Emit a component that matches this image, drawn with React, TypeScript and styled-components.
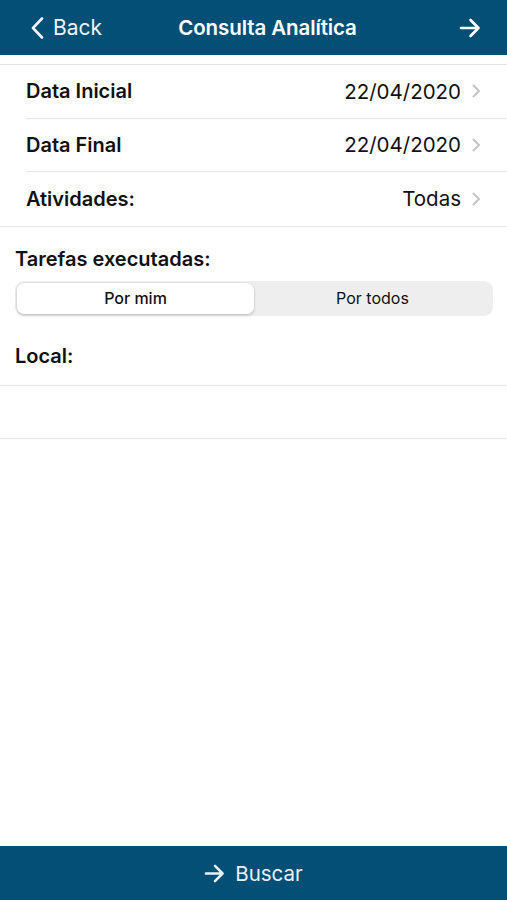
import React, { useState } from "react";
import styled, { createGlobalStyle } from "styled-components";

const Global = createGlobalStyle`
  html, body { margin: 0; padding: 0; background: #ffffff; }
  body { font-family: Inter, "Noto Sans", "Liberation Sans", sans-serif; -webkit-font-smoothing: antialiased; }
  * { box-sizing: border-box; }
`;

const BLUE = "#034f76";

const Screen = styled.div`
  width: 507px;
  height: 900px;
  display: flex;
  flex-direction: column;
  background: #ffffff;
  overflow: hidden;
`;

const NavBar = styled.header`
  height: 55px;
  flex: 0 0 55px;
  background: ${BLUE};
  display: flex;
  align-items: center;
  color: #ffffff;
`;

const NavLeft = styled.button`
  width: 120px;
  height: 100%;
  display: flex;
  align-items: center;
  gap: 9px;
  padding: 0 0 0 31px;
  border: 0;
  background: transparent;
  color: #eef4f8;
  font: 400 21px Inter, "Liberation Sans", sans-serif;
  cursor: pointer;
`;

const NavTitle = styled.h1`
  flex: 1;
  margin: 0;
  text-align: center;
  font: 600 20.5px Inter, "Liberation Sans", sans-serif;
  letter-spacing: -0.1px;
  color: #ffffff;
`;

const NavRight = styled.button`
  width: 92px;
  height: 100%;
  display: flex;
  align-items: center;
  justify-content: flex-end;
  padding: 0 26px 0 0;
  border: 0;
  background: transparent;
  color: #ffffff;
  cursor: pointer;
`;

const Content = styled.main`
  flex: 1;
  display: flex;
  flex-direction: column;
  padding-top: 9px;
`;

const Group = styled.section`
  border-top: 1px solid #e6e6e8;
  border-bottom: 1px solid #e6e6e8;
  padding-left: 26px;
`;

const Row = styled.div<{ $last?: boolean }>`
  height: 53.5px;
  display: flex;
  align-items: center;
  padding-right: 26px;
  border-bottom: ${(p) => (p.$last ? "0" : "1px solid #e6e6e8")};
`;

const RowLabel = styled.span`
  flex: 1;
  font: 600 20px Inter, "Liberation Sans", sans-serif;
  color: #111111;
`;

const RowValue = styled.span`
  font: 400 20.5px Inter, "Liberation Sans", sans-serif;
  color: #111111;
  margin-right: 11px;
`;

const SectionTitle = styled.h2`
  margin: 0;
  padding: 0 15px;
  font: 600 20px Inter, "Liberation Sans", sans-serif;
  color: #111111;
`;

const TasksBlock = styled.div`
  display: flex;
  flex-direction: column;
  gap: 10px;
  padding-top: 20px;
`;

const Segmented = styled.div`
  margin: 0 14px 0 15px;
  height: 35px;
  border-radius: 9px;
  background: #eeeeef;
  padding: 2px;
  display: grid;
  grid-template-columns: 1fr 1fr;
`;

const Segment = styled.button<{ $active?: boolean }>`
  border: 0;
  border-radius: 7px;
  background: ${(p) => (p.$active ? "#ffffff" : "transparent")};
  box-shadow: ${(p) =>
    p.$active ? "0 0 0 0.5px rgba(0,0,0,0.08), 0 2px 3px rgba(0,0,0,0.14)" : "none"};
  font: ${(p) => (p.$active ? 500 : 400)} 16px Inter, "Liberation Sans", sans-serif;
  color: #111111;
  cursor: pointer;
  padding: 0;
`;

const LocalBlock = styled.div`
  padding-top: 28px;
  display: flex;
  flex-direction: column;
`;

const LocalField = styled.div`
  margin-top: 17px;
  height: 54px;
  border-top: 1px solid #e6e6e8;
  border-bottom: 1px solid #e6e6e8;
`;

const BottomBar = styled.button`
  height: 54px;
  flex: 0 0 54px;
  background: ${BLUE};
  border: 0;
  display: flex;
  align-items: center;
  justify-content: center;
  gap: 10px;
  color: #e9f1f6;
  font: 400 20.5px Inter, "Liberation Sans", sans-serif;
  cursor: pointer;
`;

const Chevron = () => (
  <svg width="9" height="14" viewBox="0 0 9 14" fill="none">
    <path d="M1.5 1.5 L7 7 L1.5 12.5" stroke="#c4c4c7" strokeWidth="2" strokeLinecap="round" strokeLinejoin="round" />
  </svg>
);

const BackChevron = () => (
  <svg width="13" height="22" viewBox="0 0 13 22" fill="none">
    <path d="M11 1.5 L2 11 L11 20.5" stroke="currentColor" strokeWidth="2.6" strokeLinecap="round" strokeLinejoin="round" />
  </svg>
);

const Arrow = ({ size = 22 }: { size?: number }) => (
  <svg width={size} height={size} viewBox="0 0 22 22" fill="none">
    <path d="M2 11 H19.5 M11.5 3 L19.5 11 L11.5 19" stroke="currentColor" strokeWidth="2.6" strokeLinecap="round" strokeLinejoin="round" />
  </svg>
);

export default function App() {
  const [mode, setMode] = useState<"mim" | "todos">("mim");
  const rows = [
    { label: "Data Inicial", value: "22/04/2020" },
    { label: "Data Final", value: "22/04/2020" },
    { label: "Atividades:", value: "Todas" },
  ];
  return (
    <Screen>
      <Global />
      <NavBar>
        <NavLeft>
          <BackChevron />
          Back
        </NavLeft>
        <NavTitle>Consulta Analítica</NavTitle>
        <NavRight>
          <Arrow />
        </NavRight>
      </NavBar>
      <Content>
        <Group>
          {rows.map((r, i) => (
            <Row key={r.label} $last={i === rows.length - 1}>
              <RowLabel>{r.label}</RowLabel>
              <RowValue>{r.value}</RowValue>
              <Chevron />
            </Row>
          ))}
        </Group>
        <TasksBlock>
          <SectionTitle>Tarefas executadas:</SectionTitle>
          <Segmented>
            <Segment $active={mode === "mim"} onClick={() => setMode("mim")}>Por mim</Segment>
            <Segment $active={mode === "todos"} onClick={() => setMode("todos")}>Por todos</Segment>
          </Segmented>
        </TasksBlock>
        <LocalBlock>
          <SectionTitle>Local:</SectionTitle>
          <LocalField />
        </LocalBlock>
      </Content>
      <BottomBar>
        <Arrow size={21} />
        Buscar
      </BottomBar>
    </Screen>
  );
}
